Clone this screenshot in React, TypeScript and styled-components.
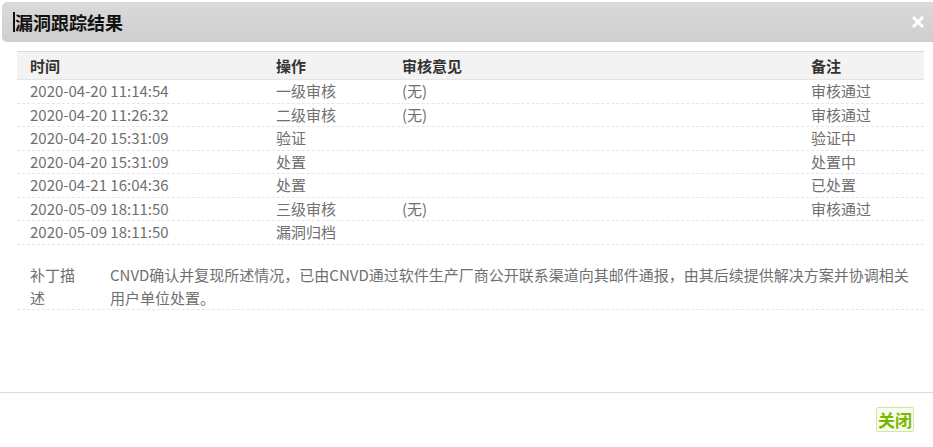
import styled, { createGlobalStyle } from "styled-components";

const GlobalStyle = createGlobalStyle`
    html, body {
        margin: 0;
        padding: 0;
        background: #ffffff;
    }
    body {
        font-family: "Noto Sans CJK SC", "Noto Sans", sans-serif;
    }
`;

interface TrackRecord {
    time: string;
    action: string;
    opinion: string;
    remark: string;
}

const RECORDS: TrackRecord[] = [
    { time: "2020-04-20 11:14:54", action: "一级审核", opinion: "(无)", remark: "审核通过" },
    { time: "2020-04-20 11:26:32", action: "二级审核", opinion: "(无)", remark: "审核通过" },
    { time: "2020-04-20 15:31:09", action: "验证", opinion: "", remark: "验证中" },
    { time: "2020-04-20 15:31:09", action: "处置", opinion: "", remark: "处置中" },
    { time: "2020-04-21 16:04:36", action: "处置", opinion: "", remark: "已处置" },
    { time: "2020-05-09 18:11:50", action: "三级审核", opinion: "(无)", remark: "审核通过" },
    { time: "2020-05-09 18:11:50", action: "漏洞归档", opinion: "", remark: "" },
];

const COLUMNS = "246px 126px 409px 1fr";

const Dialog = styled.div`
    width: 933px;
    height: 447px;
    display: flex;
    flex-direction: column;
    background: #fff;
`;

const TitleBar = styled.div`
    height: 40px;
    margin: 2px 0 0 2px;
    border-radius: 5px 0 0 5px;
    background: linear-gradient(to bottom, #dadada, #cecece);
    display: flex;
    align-items: center;
    justify-content: space-between;
    padding: 0 8px 0 11px;
`;

const Title = styled.h2`
    margin: 0;
    font-size: 18px;
    font-weight: 700;
    color: #111;
    display: flex;
    align-items: center;
    letter-spacing: 0;
`;

const Caret = styled.span`
    display: inline-block;
    width: 2px;
    height: 20px;
    background: #111;
    margin-right: 0;
`;

const CloseButton = styled.button`
    border: none;
    background: none;
    padding: 0;
    width: 14px;
    height: 14px;
    display: flex;
    align-items: center;
    justify-content: center;
    cursor: pointer;
`;

const Body = styled.div`
    height: 351px;
    box-sizing: border-box;
    padding: 9px 9px 0 17px;
    border-bottom: 1px solid #dcdcdc;
`;

const Row = styled.div<{ head?: boolean }>`
    display: grid;
    grid-template-columns: ${COLUMNS};
    font-size: 15px;
    line-height: ${(p) => (p.head ? "27px" : "22.5px")};
    color: ${(p) => (p.head ? "#333" : "#6f6f6f")};
    font-weight: ${(p) => (p.head ? 700 : 400)};
    background: ${(p) => (p.head ? "#f3f3f3" : "transparent")};
    border-top: ${(p) => (p.head ? "1px solid #dadada" : "none")};
    border-bottom: ${(p) => (p.head ? "1px solid #e4e4e4" : "1px dashed #e6e6e6")};
`;

const Cell = styled.div`
    padding-left: 13px;
    white-space: nowrap;
`;

const Note = styled.div`
    margin-top: 18px;
    display: flex;
    font-size: 15px;
    line-height: 23px;
    color: #6f6f6f;
    border-bottom: 1px dashed #e6e6e6;
`;

const NoteLabel = styled.div`
    width: 46px;
    margin: 0 34px 0 13px;
    flex-shrink: 0;
`;

const NoteText = styled.div`
    flex: 1;
    padding-right: 10px;
`;

const Footer = styled.div`
    display: flex;
    justify-content: flex-end;
    padding: 14px 19px 0 0;
`;

const ActionButton = styled.button`
    height: 25px;
    padding: 0 1px;
    border: 1px solid #cbe8a8;
    border-radius: 2px;
    background: #f8fcee;
    color: #7ab800;
    font-family: "Noto Sans CJK SC", sans-serif;
    font-size: 17px;
    font-weight: 700;
    line-height: 23px;
    cursor: pointer;
`;

export default function App() {
    return (
        <>
            <GlobalStyle />
            <Dialog>
                <TitleBar>
                    <Title>
                        <Caret />
                        漏洞跟踪结果
                    </Title>
                    <CloseButton aria-label="close">
                        <svg width="12" height="12" viewBox="0 0 12 12">
                            <path d="M2 2 L10 10 M10 2 L2 10" stroke="#fff" strokeWidth="3" strokeLinecap="square" />
                        </svg>
                    </CloseButton>
                </TitleBar>

                <Body>
                    <Row head>
                        <Cell>时间</Cell>
                        <Cell>操作</Cell>
                        <Cell>审核意见</Cell>
                        <Cell>备注</Cell>
                    </Row>
                    {RECORDS.map((r, i) => (
                        <Row key={i}>
                            <Cell>{r.time}</Cell>
                            <Cell>{r.action}</Cell>
                            <Cell>{r.opinion}</Cell>
                            <Cell>{r.remark}</Cell>
                        </Row>
                    ))}

                    <Note>
                        <NoteLabel>补丁描述</NoteLabel>
                        <NoteText>
                            CNVD确认并复现所述情况，已由CNVD通过软件生产厂商公开联系渠道向其邮件通报，由其后续提供解决方案并协调相关用户单位处置。
                        </NoteText>
                    </Note>
                </Body>

                <Footer>
                    <ActionButton>关闭</ActionButton>
                </Footer>
            </Dialog>
        </>
    );
}
